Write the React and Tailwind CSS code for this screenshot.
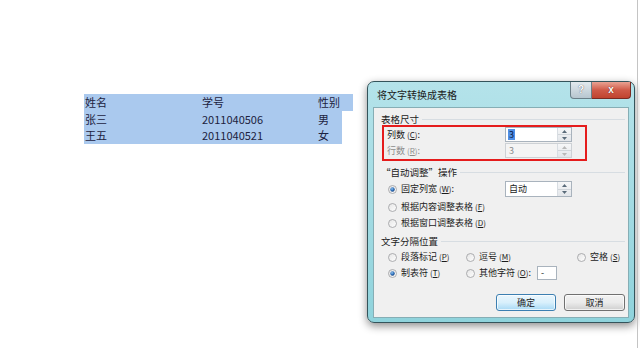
import React from "react";

const cjk = { fontFamily: '"Noto Sans CJK SC", "Noto Sans", sans-serif' };

function Spin({ disabled }) {
  const c = disabled ? "#b8b8b8" : "#5a6b7a";
  return (
    <div className="w-[14px] h-full flex flex-col border-l border-[#d8dde2] bg-gradient-to-b from-[#f6f7f8] to-[#e3e6ea]">
      <div className="flex-1 flex items-center justify-center border-b border-[#d0d5da]">
        <svg width="5" height="3" viewBox="0 0 5 3">
          <path d="M0 3 L2.5 0 L5 3 Z" fill={c} />
        </svg>
      </div>
      <div className="flex-1 flex items-center justify-center">
        <svg width="5" height="3" viewBox="0 0 5 3">
          <path d="M0 0 L2.5 3 L5 0 Z" fill={c} />
        </svg>
      </div>
    </div>
  );
}

function Radio({ checked }) {
  return (
    <svg width="9" height="9" viewBox="0 0 9 9" className="shrink-0">
      <defs>
        <linearGradient id="rg" x1="0" y1="0" x2="1" y2="1">
          <stop offset="0" stopColor="#e4e4e4" />
          <stop offset="1" stopColor="#ffffff" />
        </linearGradient>
        <radialGradient id="rd" cx="0.4" cy="0.35" r="0.7">
          <stop offset="0" stopColor="#8fc2f0" />
          <stop offset="0.6" stopColor="#2a6bb5" />
          <stop offset="1" stopColor="#163f78" />
        </radialGradient>
      </defs>
      <circle cx="4.5" cy="4.5" r="4" fill="url(#rg)" stroke="#9a9c9e" strokeWidth="0.8" />
      {checked && <circle cx="4.5" cy="4.5" r="2.2" fill="url(#rd)" />}
    </svg>
  );
}

function Header({ children }) {
  return (
    <div className="h-[14px] flex items-center pl-[7px] pr-[3px] text-[9.5px] text-[#1b1b1b]">
      <span className="whitespace-nowrap">{children}</span>
      <div className="flex-1 h-px bg-[#d7dde2] ml-[3px]" />
    </div>
  );
}

function Option({ checked, children, w }) {
  return (
    <div className={"flex items-center gap-[4px] " + (w || "")}>
      <Radio checked={checked} />
      <span className="whitespace-nowrap">{children}</span>
    </div>
  );
}

function Key({ k }) {
  return (
    <span className="text-[8px] ml-[2px]">
      (<u>{k}</u>)
    </span>
  );
}

export default function App() {
  const rows = [
    ["姓名", "学号", "性别", "w-[269px]"],
    ["张三", "2011040506", "男", "w-[258px]"],
    ["王五", "2011040521", "女", "w-[258px]"],
  ];

  return (
    <div className="w-[640px] h-[348px] bg-white flex overflow-hidden" style={cjk}>
      {/* document text */}
      <div className="w-[367px] shrink-0 pt-[94px] pl-[84px]">
        {rows.map((r, i) => (
          <div
            key={i}
            className={
              "flex items-center bg-[#aac9ee] text-[11px] text-[#1c2240] " +
              r[3] +
              (i === 1 ? " h-[16px]" : " h-[17px]")
            }
          >
            <div className="w-[118px] pl-[1px]">{r[0]}</div>
            <div className="w-[116px]">{r[1]}</div>
            <div>{r[2]}</div>
          </div>
        ))}
      </div>

      {/* dialog */}
      <div className="w-[268px] h-[242px] mt-[81px] shrink-0 rounded-[7px] border border-[#34545b] bg-gradient-to-b from-[#b4e3ea] via-[#a3dbe3] to-[#8fd3dc] shadow-[0_3px_9px_rgba(0,0,0,0.45)] flex flex-col">
        <div className="h-[25px] flex items-start pl-[9px] pr-[3px]">
          <span className="leading-[25px] text-[10px] text-[#1a1a1a]">将文字转换成表格</span>
          <div className="ml-auto flex h-[17px]">
            <div className="w-[22px] h-full rounded-bl-[4px] border border-[#6b7f88] border-t-0 bg-gradient-to-b from-[#e2eaee] to-[#b7c6cf] flex items-center justify-center">
              <span className="text-[10px] font-bold text-white leading-none" style={{ textShadow: "0 0 1px #334", fontFamily: '"Liberation Sans", sans-serif' }}>?</span>
            </div>
            <div className="w-[39px] h-full rounded-br-[4px] border border-[#7a2a22] border-t-0 border-l-0 bg-gradient-to-b from-[#e8a293] via-[#cf5a48] to-[#c0432f] flex items-center justify-center">
              <span className="text-[10px] font-bold text-white leading-none" style={{ textShadow: "0 0 1px #400", fontFamily: '"Liberation Sans", sans-serif' }}>x</span>
            </div>
          </div>
        </div>

        <div className="mx-[5px] mb-[4px] flex-1 border border-[#86aeb5] bg-[#f0f0f0] pt-[4px] text-[9px] text-[#1b1b1b] flex flex-col">
          <Header>表格尺寸</Header>

          <div className="ml-[8px] mt-[-1px] w-[205px] h-[36px] border-2 border-[#e51c1c] pl-[3px] pt-0 flex flex-col gap-[1px]">
            <div className="h-[15px] flex items-center">
              <div className="w-[118px]">
                列数<Key k="C" />:
              </div>
              <div className="w-[67px] h-[15px] border border-[#a9b3bd] bg-white flex">
                <div className="flex-1 flex items-center pl-[2px]">
                  <span className="bg-[#4f8fe6] text-[#0a1c48] leading-[11px] px-[1px]">3</span>
                </div>
                <Spin />
              </div>
            </div>
            <div className="h-[15px] flex items-center text-[#8c8c8c]">
              <div className="w-[118px]">
                行数<Key k="R" />:
              </div>
              <div className="w-[67px] h-[15px] border border-[#cdd1d5] bg-[#f4f4f4] flex">
                <div className="flex-1 flex items-center pl-[3px]">3</div>
                <Spin disabled />
              </div>
            </div>
          </div>

          <div className="mt-[4px]">
            <Header>“自动调整”操作</Header>
          </div>

          <div className="mt-[2px] h-[16px] flex items-center pl-[14px]">
            <div className="w-[117px]">
              <Option checked>
                固定列宽<Key k="W" />:
              </Option>
            </div>
            <div className="w-[67px] h-[16px] border border-[#a9b3bd] bg-white flex">
              <div className="flex-1 flex items-center pl-[3px]">自动</div>
              <Spin />
            </div>
          </div>

          <div className="mt-[2px] h-[16px] flex items-center pl-[14px]">
            <Option>
              根据内容调整表格<Key k="F" />
            </Option>
          </div>
          <div className="h-[16px] flex items-center pl-[14px]">
            <Option>
              根据窗口调整表格<Key k="D" />
            </Option>
          </div>

          <div className="mt-[3px]">
            <Header>文字分隔位置</Header>
          </div>

          <div className="mt-[1px] h-[16px] flex items-center pl-[14px]">
            <Option w="w-[78px]">
              段落标记<Key k="P" />
            </Option>
            <Option w="w-[111px]">
              逗号<Key k="M" />
            </Option>
            <Option>
              空格<Key k="S" />
            </Option>
          </div>
          <div className="h-[16px] flex items-center pl-[14px]">
            <Option checked w="w-[78px]">
              制表符<Key k="T" />
            </Option>
            <div className="flex items-center">
              <Option>
                其他字符<Key k="O" />:
              </Option>
              <div className="ml-[6px] w-[20px] h-[14px] border border-[#a9b3bd] bg-white flex items-center pl-[3px]">
                -
              </div>
            </div>
          </div>

          <div className="mt-[13px] flex justify-end gap-[8px] pr-[3px]">
            <div className="w-[60px] h-[17px] rounded-[3px] border border-[#3c7fb1] bg-gradient-to-b from-[#eaf6fd] via-[#d9f0fc] to-[#a7d9f5] shadow-[inset_0_0_0_1px_rgba(255,255,255,0.7)] flex items-center justify-center">
              确定
            </div>
            <div className="w-[61px] h-[17px] rounded-[3px] border border-[#707070] bg-gradient-to-b from-[#f2f2f2] via-[#ebebeb] to-[#cfcfcf] shadow-[inset_0_0_0_1px_rgba(255,255,255,0.7)] flex items-center justify-center">
              取消
            </div>
          </div>
        </div>
      </div>

      <div className="w-[2px] shrink-0" />
      <div className="w-px h-full bg-[#c4c4c4] shrink-0" />
    </div>
  );
}
